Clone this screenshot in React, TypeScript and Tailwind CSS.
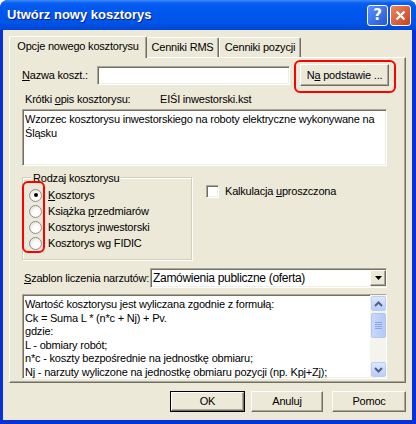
import type { ReactNode } from "react";

const font = "font-['Liberation_Sans',Arial,sans-serif]";

// classic 3D borders
const sunken =
    "border border-t-[#aca899] border-l-[#aca899] border-r-white border-b-white shadow-[inset_1px_1px_0_#716f64,inset_-1px_-1px_0_#f1efe2]";
const raised =
    "border border-t-white border-l-white border-r-[#716f64] border-b-[#716f64] shadow-[inset_-1px_-1px_0_#aca899]";

function U({ children }: { children: ReactNode }) {
    return <span className="underline underline-offset-[1px]">{children}</span>;
}

function Radio({ checked, children }: { checked?: boolean; children: ReactNode }) {
    return (
        <div className="flex items-center h-[16px]">
            <div className="w-[13px] h-[13px] rounded-full border border-[#8f8f8f] bg-[radial-gradient(circle_at_60%_65%,#ffffff_30%,#d8d6cc_100%)] flex items-center justify-center ml-[6px]">
                {checked && <div className="w-[4px] h-[4px] rounded-full bg-black" />}
            </div>
            <span className="ml-[6px] whitespace-nowrap">{children}</span>
        </div>
    );
}

function TabLabel({ active, width, children }: { active?: boolean; width: string; children: ReactNode }) {
    return (
        <div
            className={`${width} ${
                active ? "h-[22px] relative z-10 -mb-px -mr-[1px] pb-[3px]" : "h-[20px] pb-[1px]"
            } bg-[#ece9d8] border-t border-l border-t-white border-l-white border-r border-r-[#716f64] shadow-[inset_-1px_0_0_#aca899] rounded-tl-[2px] rounded-tr-[2px] flex items-center justify-center whitespace-nowrap`}
        >
            {children}
        </div>
    );
}

function ScrollArrow({ down }: { down?: boolean }) {
    return (
        <div className="h-[15px] w-[15px] rounded-[2px] bg-gradient-to-b from-[#dde8fe] to-[#b9cdf9] border border-[#bacdf8] flex items-center justify-center">
            <svg width="9" height="6" viewBox="0 0 9 6">
                <path
                    d={down ? "M1 1 L4.5 4.5 L8 1" : "M1 5 L4.5 1.5 L8 5"}
                    stroke="#4d6185"
                    strokeWidth="2"
                    fill="none"
                />
            </svg>
        </div>
    );
}

export default function App() {
    return (
        <div className={`w-[416px] h-[424px] bg-white text-[11px] tracking-[-0.2px] text-black ${font}`}>
            <div className="w-full h-full rounded-t-[8px] overflow-hidden flex flex-col bg-[#0831d9]">
                {/* title bar */}
                <div className="h-[30px] shrink-0 flex items-center bg-[linear-gradient(to_bottom,#3c8cfd_0px,#0a5ff0_3px,#0058ee_8px,#0054e8_22px,#0047d6_30px)]">
                    <span className="ml-[7px] text-[13px] tracking-normal font-bold text-white [text-shadow:1px_1px_0_#0a1e8c]">
                        Utwórz nowy kosztorys
                    </span>
                    <div className="ml-auto flex gap-[2px] mr-[5px] mt-[1px]">
                        <div className="w-[21px] h-[21px] rounded-[3px] border border-white bg-gradient-to-br from-[#5d8ff8] to-[#2457d9] flex items-center justify-center text-white font-bold text-[15px] font-['DejaVu_Sans',sans-serif]">
                            ?
                        </div>
                        <div className="w-[21px] h-[21px] rounded-[3px] border border-white bg-gradient-to-br from-[#e8865e] to-[#c9401e] flex items-center justify-center">
                            <svg width="11" height="11" viewBox="0 0 11 11">
                                <path d="M1.5 1.5 L9.5 9.5 M9.5 1.5 L1.5 9.5" stroke="white" strokeWidth="2.2" />
                            </svg>
                        </div>
                    </div>
                </div>

                {/* client area */}
                <div className="flex-1 ml-[3px] mr-[4px] mb-[4px] bg-[#ece9d8] relative pt-[5px] pl-[6px]">
                    {/* tabs */}
                    <div className="flex items-end h-[22px]">
                        <TabLabel active width="w-[138px]">Opcje nowego kosztorysu</TabLabel>
                        <TabLabel width="w-[73px]">Cenniki RMS</TabLabel>
                        <TabLabel width="w-[82px]">Cenniki pozycji</TabLabel>
                    </div>

                    {/* panel */}
                    <div className="w-[397px] h-[326px] border border-t-white border-l-white border-r-[#716f64] border-b-[#716f64] shadow-[inset_-1px_-1px_0_#aca899] pl-[12px] pt-[6px]">
                        <div className="flex items-center h-[22px]">
                            <span className="w-[75px] whitespace-nowrap">
                                <U>N</U>azwa koszt.:
                            </span>
                            <div className={`w-[193px] h-[19px] bg-white ${sunken}`} />
                            <div className={`ml-[10px] w-[89px] h-[22px] ${raised} flex items-center justify-center`}>
                                <span className="whitespace-nowrap">
                                    N<U>a</U> podstawie ...
                                </span>
                            </div>
                        </div>

                        <div className="flex items-center h-[16px] mt-[5px] pl-[3px] whitespace-nowrap">
                            <span className="w-[135px]">
                                Krótki <U>o</U>pis kosztorysu:
                            </span>
                            <span>EIŚI inwestorski.kst</span>
                        </div>

                        <div className={`w-[365px] h-[57px] mt-[2px] bg-white ${sunken} pl-[2px] pr-[1px] pt-[2px] leading-[14px]`}>
                            Wzorzec kosztorysu inwestorskiego na roboty elektryczne wykonywane na Śląsku
                        </div>

                        <div className="flex mt-[5px]">
                            {/* group box */}
                            <div className="relative w-[170px] h-[83px] mt-[6px] border border-[#d0d0bf] shadow-[1px_1px_0_white,inset_1px_1px_0_white] pt-[9px]">
                                <span className="absolute -top-[8px] left-[8px] px-[2px] bg-[#ece9d8] whitespace-nowrap">
                                    Rodzaj kosztorysu
                                </span>
                                <Radio checked>
                                    <U>K</U>osztorys
                                </Radio>
                                <Radio>
                                    Książka <U>p</U>rzedmiarów
                                </Radio>
                                <Radio>
                                    Kosztorys <U>i</U>nwestorski
                                </Radio>
                                <Radio>Kosztorys wg FIDIC</Radio>
                            </div>

                            <div className="flex items-center h-[14px] ml-[14px] mt-[13px]">
                                <div className={`w-[13px] h-[13px] bg-white ${sunken}`} />
                                <span className="ml-[6px] whitespace-nowrap">
                                    Kalkulacja <U>u</U>proszczona
                                </span>
                            </div>
                        </div>

                        <div className="flex items-center h-[20px] mt-[8px] pl-[2px]">
                            <span className="w-[126px] whitespace-nowrap">
                                <U>S</U>zablon liczenia narzutów:
                            </span>
                            <div className={`w-[237px] h-[20px] bg-white ${sunken} flex items-center pl-[2px]`}>
                                <span className="flex-1 text-[12px] tracking-[-0.3px] whitespace-nowrap">
                                    Zamówienia publiczne (oferta)
                                </span>
                                <div className={`w-[16px] h-[16px] bg-[#ece9d8] ${raised} flex items-center justify-center`}>
                                    <svg width="7" height="4" viewBox="0 0 7 4">
                                        <path d="M0 0 H7 L3.5 4 Z" fill="black" />
                                    </svg>
                                </div>
                            </div>
                        </div>

                        <div className={`w-[365px] h-[85px] mt-[6px] bg-white ${sunken} flex overflow-hidden`}>
                            <div className="flex-1 pl-[2px] pt-[3px] leading-[13.5px] whitespace-nowrap overflow-hidden">
                                <div>Wartość kosztorysu jest wyliczana zgodnie z formułą:</div>
                                <div>Ck = Suma L * (n*c + Nj) + Pv.</div>
                                <div>gdzie:</div>
                                <div>L - obmiary robót;</div>
                                <div>n*c - koszty bezpośrednie na jednostkę obmiaru;</div>
                                <div>Nj - narzuty wyliczone na jednostkę obmiaru pozycji (np. Kpj+Zj);</div>
                            </div>
                            <div className="w-[16px] bg-[#f4f3ee] flex flex-col items-center py-[1px]">
                                <ScrollArrow />
                                <div className="mt-[2px] h-[25px] w-[15px] rounded-[2px] bg-gradient-to-r from-[#c9d8fc] to-[#b5c9f7] border border-[#b2c6f5] flex flex-col items-center justify-center gap-[1px]">
                                    <div className="w-[7px] h-px bg-[#8ca3de]" />
                                    <div className="w-[7px] h-px bg-[#8ca3de]" />
                                    <div className="w-[7px] h-px bg-[#8ca3de]" />
                                    <div className="w-[7px] h-px bg-[#8ca3de]" />
                                </div>
                                <div className="flex-1" />
                                <ScrollArrow down />
                            </div>
                        </div>
                    </div>

                    {/* dialog buttons */}
                    <div className="flex mt-[8px] ml-[161px] gap-[6px]">
                        <div className="w-[75px] h-[21px] border border-black flex">
                            <div className={`flex-1 ${raised} flex items-center justify-center`}>OK</div>
                        </div>
                        <div className={`w-[72px] h-[21px] ${raised} flex items-center justify-center`}>Anuluj</div>
                        <div className={`ml-[3px] w-[74px] h-[21px] ${raised} flex items-center justify-center`}>
                            Pomoc
                        </div>
                    </div>

                    {/* red annotation marks */}
                    <div className="absolute left-[291px] top-[30px] w-[102px] h-[33px] rounded-[6px] border-2 border-[#ff0000] pointer-events-none" />
                    <div className="absolute left-[19px] top-[151px] w-[23px] h-[72px] rounded-[6px] border-2 border-[#ff0000] pointer-events-none" />
                </div>
            </div>
        </div>
    );
}
